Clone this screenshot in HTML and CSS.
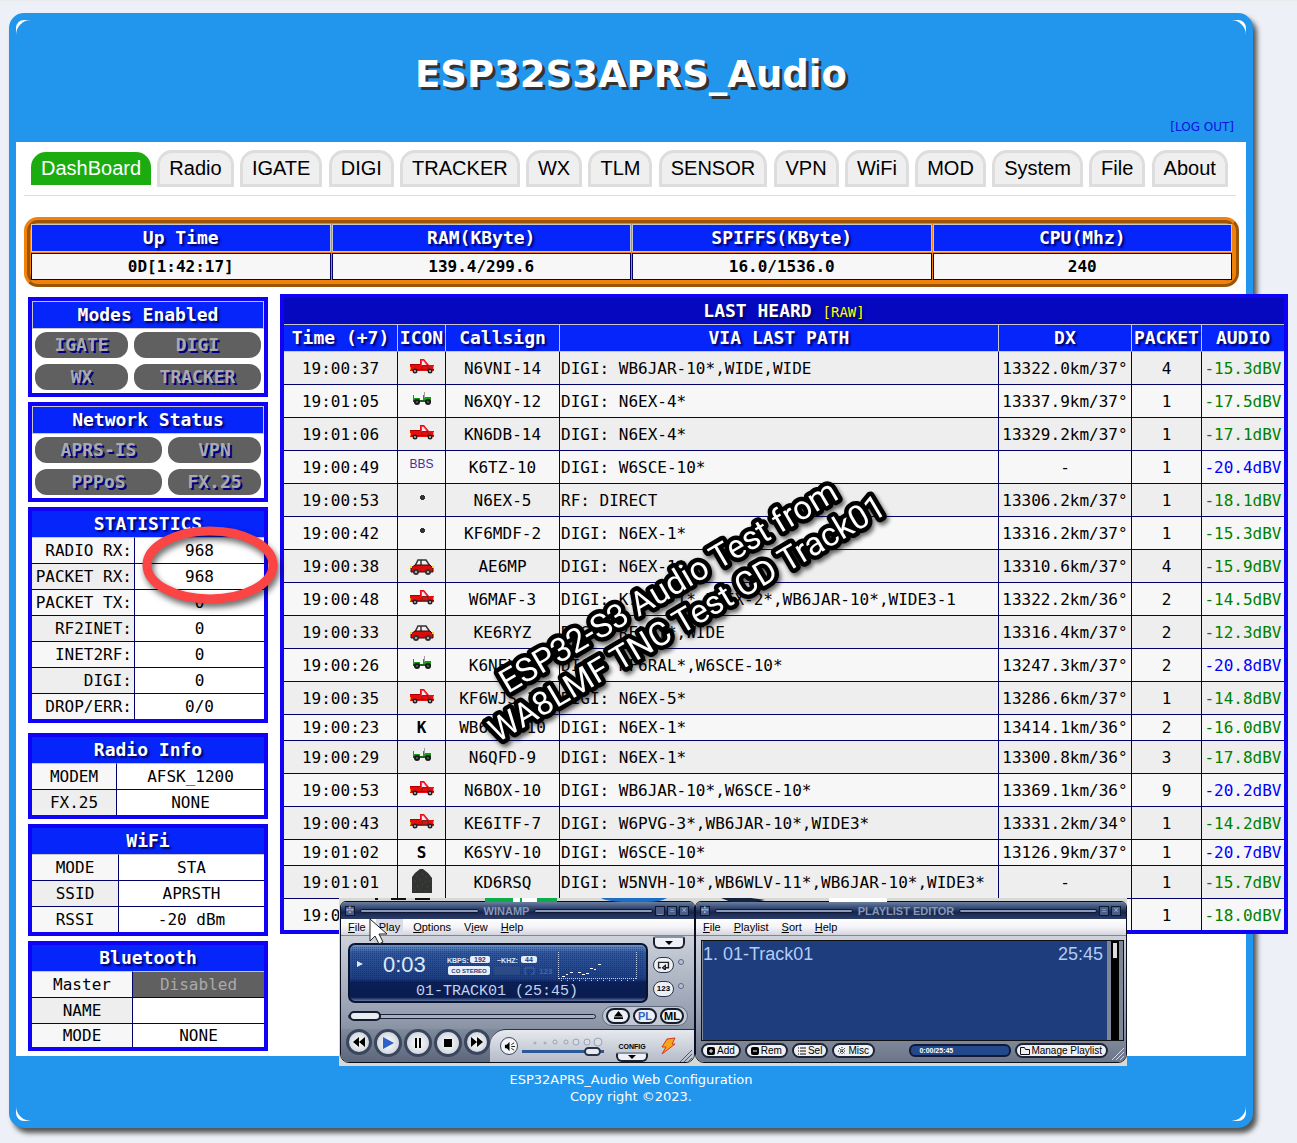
FILE: index.html
```html
<!DOCTYPE html>
<html lang="en">
<head>
<meta charset="utf-8">
<title>ESP32S3APRS_Audio</title>
<link rel="stylesheet" href="styles.css">
</head>
<body>
<svg class="sprites" aria-hidden="true">
  <symbol id="truck" viewBox="0 0 24 16">
    <path d="M0 6h10v-5h4l5 6h5v6H0z" fill="#e80c0c"/>
    <path d="M11.500 2.500h2l4 5h-6z" fill="#f7e9ee" stroke="#f0325f"/>
    <path d="M0 6h10v1H0zM0 11h24v1H0z" fill="#a00"/>
    <path d="M12 7.500h6v4h-6z" fill="none" stroke="#7c2020"/>
    <circle cx="5" cy="13" r="2.500" fill="#222"/><circle cx="5" cy="13" r="1" fill="#bbb"/>
    <circle cx="20" cy="13" r="2.500" fill="#222"/><circle cx="20" cy="13" r="1" fill="#bbb"/>
    <path d="M0 9h1v3H0zM23 8h1v3h-1z" fill="#f5a000"/>
  </symbol>
  <symbol id="jeep" viewBox="0 0 24 16">
    <path d="M3 4h1v3h6v2h3V4h1v2h7v5H3z" fill="#10a010"/>
    <path d="M3 9h18v2H3z" fill="#1c5e1c"/><path d="M14 1h1v6h-1z" fill="#a9a"/>
    <circle cx="7" cy="11" r="3" fill="#1a1a1a"/><circle cx="18" cy="11" r="3" fill="#1a1a1a"/>
    <circle cx="7" cy="11" r="1" fill="#666"/><circle cx="18" cy="11" r="1" fill="#666"/>
  </symbol>
  <symbol id="car" viewBox="0 0 24 18">
    <path d="M5 8l3-6h8l4 6z" fill="#eee" stroke="#333" stroke-width="1.500"/>
    <path d="M11 2v6" stroke="#333" stroke-width="1.500"/>
    <path d="M1 13v-3l4-3h15l3 3v4H1z" fill="#d80c0c" stroke="#400" stroke-width="1"/>
    <path d="M0 8h2v2H0zM22 8h2v2h-2z" fill="#f0e000"/>
    <circle cx="6" cy="14" r="3" fill="#333"/><circle cx="18" cy="14" r="3" fill="#333"/>
    <circle cx="6" cy="14" r="1" fill="#ccc"/><circle cx="18" cy="14" r="1" fill="#ccc"/>
  </symbol>
  <symbol id="dot" viewBox="0 0 24 16"><path d="M11 5h3v1h1v3h-1v1h-3V9h-1V6h1z" fill="#333"/></symbol>
  <symbol id="dome" viewBox="0 0 24 26">
    <path d="M2 25V9l3-4 5-4h3l5 4 4 5v15z" fill="#333"/>
    <path d="M7 8h1M12 6h1M16 9h1M5 13h1M10 12h1M15 14h1M19 13h1M7 18h1M12 17h1M17 19h1M5 22h1M10 22h1M15 23h1" stroke="#2c6b2c"/>
  </symbol>
</svg>

<div class="container">
  <header class="header">
    <h1>ESP32S3APRS_Audio</h1>
    <a class="logout" href="#logout">[LOG OUT]</a>
  </header>

  <main class="content">
    <nav class="tabs">
      <button class="tab active">DashBoard</button>
      <button class="tab">Radio</button>
      <button class="tab">IGATE</button>
      <button class="tab">DIGI</button>
      <button class="tab">TRACKER</button>
      <button class="tab">WX</button>
      <button class="tab">TLM</button>
      <button class="tab">SENSOR</button>
      <button class="tab">VPN</button>
      <button class="tab">WiFi</button>
      <button class="tab">MOD</button>
      <button class="tab">System</button>
      <button class="tab">File</button>
      <button class="tab">About</button>
    </nav>

    <table class="sysinfo">
      <tr><th>Up Time</th><th>RAM(KByte)</th><th>SPIFFS(KByte)</th><th>CPU(Mhz)</th></tr>
      <tr><td>0D[1:42:17]</td><td>139.4/299.6</td><td>16.0/1536.0</td><td>240</td></tr>
    </table>

    <div class="dashboard">
      <aside class="side">
        <section class="panel">
          <h2 class="framed">Modes Enabled</h2>
          <div class="pills modes"><span>IGATE</span><span>DIGI</span><span>WX</span><span>TRACKER</span></div>
        </section>
        <section class="panel">
          <h2 class="framed">Network Status</h2>
          <div class="pills network"><span>APRS-IS</span><span>VPN</span><span>PPPoS</span><span>FX.25</span></div>
        </section>
        <table class="panel stats">
          <tr><th colspan="2">STATISTICS</th></tr>
          <tr><td>RADIO RX:</td><td>968</td></tr>
          <tr><td>PACKET RX:</td><td>968</td></tr>
          <tr><td>PACKET TX:</td><td>0</td></tr>
          <tr><td>RF2INET:</td><td>0</td></tr>
          <tr><td>INET2RF:</td><td>0</td></tr>
          <tr><td>DIGI:</td><td>0</td></tr>
          <tr><td>DROP/ERR:</td><td>0/0</td></tr>
        </table>
        <table class="panel radio">
          <tr><th colspan="2">Radio Info</th></tr>
          <tr><td>MODEM</td><td>AFSK_1200</td></tr>
          <tr><td>FX.25</td><td>NONE</td></tr>
        </table>
        <table class="panel wifi">
          <tr><th colspan="2">WiFi</th></tr>
          <tr><td>MODE</td><td>STA</td></tr>
          <tr><td>SSID</td><td>APRSTH</td></tr>
          <tr><td>RSSI</td><td>-20 dBm</td></tr>
        </table>
        <table class="panel bluetooth">
          <tr><th colspan="2">Bluetooth</th></tr>
          <tr><td>Master</td><td class="disabled">Disabled</td></tr>
          <tr><td>NAME</td><td></td></tr>
          <tr><td>MODE</td><td>NONE</td></tr>
        </table>
      </aside>

      <div class="heard-wrap">
      <table class="heard">
        <colgroup><col class="c-time"><col class="c-icon"><col class="c-call"><col><col class="c-dx"><col class="c-packet"><col class="c-audio"></colgroup>
        <tr class="title"><th colspan="7">LAST HEARD <a href="#raw">[RAW]</a></th></tr>
        <tr><th>Time (+7)</th><th>ICON</th><th>Callsign</th><th>VIA LAST PATH</th><th>DX</th><th>PACKET</th><th>AUDIO</th></tr>
        <tr><td>19:00:37</td><td><svg class="ic"><use href="#truck"/></svg></td><td>N6VNI-14</td><td>DIGI: WB6JAR-10*,WIDE,WIDE</td><td>13322.0km/37°</td><td>4</td><td>-15.3dBV</td></tr>
        <tr><td>19:01:05</td><td><svg class="ic"><use href="#jeep"/></svg></td><td>N6XQY-12</td><td>DIGI: N6EX-4*</td><td>13337.9km/37°</td><td>1</td><td>-17.5dBV</td></tr>
        <tr><td>19:01:06</td><td><svg class="ic"><use href="#truck"/></svg></td><td>KN6DB-14</td><td>DIGI: N6EX-4*</td><td>13329.2km/37°</td><td>1</td><td>-17.1dBV</td></tr>
        <tr><td>19:00:49</td><td><span class="bbs">BBS</span></td><td>K6TZ-10</td><td>DIGI: W6SCE-10*</td><td>-</td><td>1</td><td class="low">-20.4dBV</td></tr>
        <tr><td>19:00:53</td><td><svg class="ic"><use href="#dot"/></svg></td><td>N6EX-5</td><td>RF: DIRECT</td><td>13306.2km/37°</td><td>1</td><td>-18.1dBV</td></tr>
        <tr><td>19:00:42</td><td><svg class="ic"><use href="#dot"/></svg></td><td>KF6MDF-2</td><td>DIGI: N6EX-1*</td><td>13316.2km/37°</td><td>1</td><td>-15.3dBV</td></tr>
        <tr><td>19:00:38</td><td><svg class="ic tall"><use href="#car"/></svg></td><td>AE6MP</td><td>DIGI: N6EX-1*</td><td>13310.6km/37°</td><td>4</td><td>-15.9dBV</td></tr>
        <tr><td>19:00:48</td><td><svg class="ic"><use href="#truck"/></svg></td><td>W6MAF-3</td><td>DIGI: K7GJE-1*,N6EX-2*,WB6JAR-10*,WIDE3-1</td><td>13322.2km/36°</td><td>2</td><td>-14.5dBV</td></tr>
        <tr><td>19:00:33</td><td><svg class="ic tall"><use href="#car"/></svg></td><td>KE6RYZ</td><td>DIGI: RELAY*,WIDE</td><td>13316.4km/37°</td><td>2</td><td>-12.3dBV</td></tr>
        <tr><td>19:00:26</td><td><svg class="ic"><use href="#jeep"/></svg></td><td>K6NEX-4</td><td>DIGI: KF6RAL*,W6SCE-10*</td><td>13247.3km/37°</td><td>2</td><td class="low">-20.8dBV</td></tr>
        <tr><td>19:00:35</td><td><svg class="ic"><use href="#truck"/></svg></td><td>KF6WJS-14</td><td>DIGI: N6EX-5*</td><td>13286.6km/37°</td><td>1</td><td>-14.8dBV</td></tr>
        <tr class="short"><td>19:00:23</td><td><b>K</b></td><td>WB6JAR-10</td><td>DIGI: N6EX-1*</td><td>13414.1km/36°</td><td>2</td><td>-16.0dBV</td></tr>
        <tr><td>19:00:29</td><td><svg class="ic"><use href="#jeep"/></svg></td><td>N6QFD-9</td><td>DIGI: N6EX-1*</td><td>13300.8km/36°</td><td>3</td><td>-17.8dBV</td></tr>
        <tr><td>19:00:53</td><td><svg class="ic"><use href="#truck"/></svg></td><td>N6BOX-10</td><td>DIGI: WB6JAR-10*,W6SCE-10*</td><td>13369.1km/36°</td><td>9</td><td class="low">-20.2dBV</td></tr>
        <tr><td>19:00:43</td><td><svg class="ic"><use href="#truck"/></svg></td><td>KE6ITF-7</td><td>DIGI: W6PVG-3*,WB6JAR-10*,WIDE3*</td><td>13331.2km/34°</td><td>1</td><td>-14.2dBV</td></tr>
        <tr class="short"><td>19:01:02</td><td><b>S</b></td><td>K6SYV-10</td><td>DIGI: W6SCE-10*</td><td>13126.9km/37°</td><td>1</td><td class="low">-20.7dBV</td></tr>
        <tr><td>19:01:01</td><td><svg class="ic dome"><use href="#dome"/></svg></td><td>KD6RSQ</td><td>DIGI: W5NVH-10*,WB6WLV-11*,WB6JAR-10*,WIDE3*</td><td>-</td><td>1</td><td>-15.7dBV</td></tr>
        <tr><td>19:00:31</td><td></td><td></td><td></td><td></td><td>1</td><td>-18.0dBV</td></tr>
      </table>
      </div>
    </div>
  </main>

  <footer class="footer">ESP32APRS_Audio Web Configuration<br>Copy right ©2023.</footer>
</div>

<svg class="ring" viewBox="0 0 150 96" aria-hidden="true"><ellipse cx="72" cy="43" rx="63" ry="34" fill="none" stroke="#fb4444" stroke-width="9"/></svg>

<svg class="note" viewBox="0 0 460 320">
  <g transform="rotate(-30.500 230 160)" text-anchor="middle">
    <text x="230" y="152">ESP32-S3 Audio Test from</text>
    <text x="230" y="189">WA8LMF TNC Test CD Track01</text>
  </g>
</svg>

<div class="winamp">
  <svg class="scraps" viewBox="0 0 788 4" aria-hidden="true">
    <path d="M36 0h3v2h-3zM52 0h15v2H52zM76 0h15v2H76z" fill="#111"/>
    <path d="M146 0h72v4h-72z" fill="#0aad4a"/><path d="M174 0h7v4h-7zM183 0h15v4h-15z" fill="#fff"/>
    <path d="M262 0h66q-6 4-20 4h-24q-18-1-22-4z" fill="#1c6fc4"/>
    <path d="M382 0h30l14 2-10 2h-24z" fill="#16233f"/><path d="M490 0h58v4h-58z" fill="#fff"/>
  </svg>
  <section class="win player">
    <div class="bar"><i class="sys">✣</i><i class="grip"></i><b>WINAMP</b><i class="grip"></i>
      <button aria-label="Minimise">_</button><button aria-label="Shade">=</button><button aria-label="Close">×</button></div>
    <div class="menu"><button><u>F</u>ile</button><button class="hot">Play</button><button><u>O</u>ptions</button><button>V<u>i</u>ew</button><button><u>H</u>elp</button></div>
    <div class="deck">
      <div class="top">
        <svg class="display" viewBox="0 0 300 60">
          <defs>
            <linearGradient id="lcd" x2="0" y2="1"><stop stop-color="#6f9ad0"/><stop offset=".15" stop-color="#31569a"/><stop offset=".6" stop-color="#1d3d80"/><stop offset=".66" stop-color="#0b1f55"/><stop offset=".92" stop-color="#0a1c50"/><stop offset="1" stop-color="#7b93c0"/></linearGradient>
            <pattern id="mesh" width="2" height="2" patternUnits="userSpaceOnUse"><path d="M0 0h1v1H0z" fill="#0a1f58" opacity=".45"/></pattern>
          </defs>
          <rect x="1" y="1" width="298" height="58" rx="6" fill="url(#lcd)" stroke="#0a1430" stroke-width="2"/>
          <rect x="4" y="4" width="292" height="36" fill="url(#mesh)"/>
          <path d="M9 18l6 3-6 3z" fill="#dfe9fa"/>
          <text x="35" y="29" class="lcd-time">0:03</text>
          <text x="99" y="20" class="lcd-tiny">KBPS:</text>
          <rect x="122" y="13" width="20" height="7" rx="2" fill="#e8effc"/><text x="126" y="19" class="lcd-tiny dark">192</text>
          <text x="149" y="20" class="lcd-tiny">~KHZ:</text>
          <rect x="173" y="13" width="16" height="7" rx="2" fill="#e8effc"/><text x="177" y="19" class="lcd-tiny dark">44</text>
          <rect x="100" y="23" width="42" height="9" rx="2" fill="#e8effc"/><text x="121" y="30" text-anchor="middle" class="lcd-stereo">CO STEREO</text>
          <rect x="146" y="23" width="26" height="9" rx="2" fill="#2c4a86"/>
          <path d="M179 31h-2v-6h9v6h-3" fill="none" stroke="#4466a0"/><text x="191" y="31" class="lcd-dim">123</text>
          <g stroke="#c3d3ef" fill="none"><path d="M210.500 9v28M288.500 9v28" stroke-dasharray="1 1"/><path d="M211 35.500h78" stroke-dasharray="1 1"/><path d="M213 37.500h75" stroke-dasharray="1 5"/></g>
          <path d="M214 33h3v1h-3zM218 31h2v1h-2zM222 29h3v1h-3zM230 29h3v1h-3zM234 31h3v1h-3zM238 30h3v1h-3zM242 25h3v1h-3zM246 26h2v1h-2zM250 21h3v1h-3z" fill="#fff"/>
          <text x="149" y="52" text-anchor="middle" class="lcd-track">01-TRACK01 (25:45)</text>
        </svg>
        <div class="toggles">
          <button class="drop" aria-label="Options menu"><svg viewBox="0 0 8 4"><path d="M0 0h8L4 4z"/></svg></button>
          <span><button class="oval" aria-label="Repeat"><svg viewBox="0 0 14 10"><path d="M4 7.500H1.500v-6h11v6H9M9 5v5L6 7.500z" fill="none" stroke="#222" stroke-width="1.500"/></svg></button><i class="led"></i></span>
          <span><button class="oval" aria-label="Shuffle">123</button><i class="led"></i></span>
        </div>
      </div>
      <div class="seek">
        <input type="range" class="pos" min="0" max="100" value="0" aria-label="Position">
        <div class="chips"><button aria-label="Eject"><svg viewBox="0 0 10 10"><path d="M5 0l5 6H0zM0 7h10v2H0z"/></svg></button><button class="on">PL</button><button>ML</button></div>
      </div>
      <div class="transport">
        <div class="keys">
          <button class="sm" aria-label="Previous"><svg viewBox="0 0 12 12"><path d="M6 1v10L0 6zM12 1v10L6 6z"/></svg></button>
          <button aria-label="Play"><svg viewBox="0 0 12 12"><path d="M1 0l11 6-11 6z" fill="#2e62c8"/></svg></button>
          <button aria-label="Pause"><svg viewBox="0 0 12 12"><path d="M3 1h2v10H3zM7 1h2v10H7z"/></svg></button>
          <button aria-label="Stop"><svg viewBox="0 0 12 12"><path d="M2 2h8v8H2z"/></svg></button>
          <button class="sm" aria-label="Next"><svg viewBox="0 0 12 12"><path d="M0 1l6 5-6 5zM6 1l6 5-6 5z"/></svg></button>
        </div>
        <div class="volume">
          <button class="spk" aria-label="Mute"><svg viewBox="0 0 12 12"><path d="M1 4h2l3-3v10L3 8H1z"/><path d="M8 4l3-2M8 6h4M8 8l3 2" stroke="#111"/></svg></button>
          <div class="level">
            <svg viewBox="0 0 82 10" aria-hidden="true"><g fill="#d9dde5" stroke="#9aa3b3"><circle cx="13" cy="6" r="1"/><circle cx="23" cy="6" r="1"/><circle cx="33" cy="5" r="2"/><circle cx="44" cy="5" r="2"/><circle cx="54" cy="5" r="3"/><circle cx="65" cy="5" r="3"/><circle cx="76" cy="5" r="4"/></g></svg>
            <input type="range" class="vol" min="0" max="100" value="95" aria-label="Volume">
          </div>
          <div class="config">CONFIG<button class="drop" aria-label="Config"><svg viewBox="0 0 8 4"><path d="M0 0h8L4 4z"/></svg></button></div>
          <svg class="bolt" viewBox="0 0 16 18"><path d="M7 2l8-1-3 6h3L2 17l4-7H2z" fill="#f9a51c" stroke="#d2381a"/></svg>
          <svg class="resize" viewBox="0 0 12 12"><path d="M0 12L12 0M4 12l8-8M8 12l4-4" stroke="#4d586c"/></svg>
        </div>
      </div>
    </div>
  </section>

  <section class="win playlist">
    <div class="bar"><i class="sys">✣</i><i class="grip"></i><b>PLAYLIST EDITOR</b><i class="grip"></i>
      <button aria-label="Shade">=</button><button aria-label="Close">×</button></div>
    <div class="menu"><button><u>F</u>ile</button><button><u>P</u>laylist</button><button><u>S</u>ort</button><button><u>H</u>elp</button></div>
    <div class="deck">
      <div class="list"><div class="track"><span>1. 01-Track01</span><span>25:45</span></div><i class="scroll"></i></div>
      <div class="tools">
        <button><svg viewBox="0 0 10 8"><rect x="1" width="8" height="8" rx="2"/><path d="M3 4h4M5 2v4" stroke="#fff"/></svg>Add</button>
        <button><svg viewBox="0 0 10 8"><rect x="1" width="8" height="8" rx="2"/><path d="M3 4h4" stroke="#fff"/></svg>Rem</button>
        <button><svg viewBox="0 0 10 8"><path d="M1 1h1M3 1h6M1 4h1M3 4h6M1 7h1M3 7h6" stroke="#111"/></svg>Sel</button>
        <button><svg viewBox="0 0 10 8"><path d="M5 0v8M1 4h8M2 1l6 6M8 1L2 7" stroke="#111" stroke-dasharray="1 1"/></svg>Misc</button>
        <span class="clock">0:00/25:45</span>
        <button><svg viewBox="0 0 10 8"><path d="M.500 7.500v-7h4l1 2h4v5z" fill="none" stroke="#111"/></svg>Manage Playlist</button>
        <svg class="resize" viewBox="0 0 12 12"><path d="M0 12L12 0M4 12l8-8M8 12l4-4" stroke="#d5dbe6"/></svg>
      </div>
    </div>
  </section>
</div>
<svg class="cursor" viewBox="0 0 20 28" aria-hidden="true"><path d="M1 1v22l5-5 4 8 4-2-4-8h8z" fill="#fff" stroke="#222"/></svg>
</body>
</html>
```

FILE: styles.css
```css
* { box-sizing: border-box; }
body {
  margin: 0;
  padding: 12px 44px 15px 9px;
  border-top: 1px solid #e8eaec;
  position: relative;
  background: #edf0f6;
  font-family: "DejaVu Sans Mono", monospace;
  font-size: 16px;
  line-height: 20px;
  color: #000;
}
button { font: inherit; color: inherit; margin: 0; padding: 0; border: 0; background: none; }
.sprites { position: absolute; width: 0; height: 0; }

.container {
  border: 7px solid #2196ec;
  border-radius: 15px;
  background: #fff;
  box-shadow: 4px 5px 5px #555;
}
.header {
  height: 122px;
  padding: 31px 12px 5px;
  border-radius: 15px 15px 0 0;
  background: #2196ec;
  display: flex;
  flex-direction: column;
  justify-content: space-between;
  font-family: "DejaVu Sans", sans-serif;
}
h1 {
  margin: 0;
  text-align: center;
  font: bold 37px/48px "DejaVu Sans", sans-serif;
  color: #fff;
  text-shadow: 3px 3px 0 #333;
}
.logout { align-self: flex-end; font-size: 12px; line-height: 20px; color: #0a12e0; text-decoration: none; }

.tabs {
  margin: 0 10px 21px 8px;
  padding: 8px 8px 8px 7px;
  border-bottom: 1px solid #ddd;
  display: flex;
  align-items: center;
  justify-content: space-between;
}
.tab {
  height: 37px;
  padding: 0 9px;
  border: 3px solid #ddd;
  border-radius: 15px 15px 0 0;
  background: #efefef;
  font: 20px/23px "Liberation Sans", sans-serif;
  white-space: nowrap;
}
.tab.active { height: 33px; padding: 0 10px; border: 0; background: #1bad0f; color: #fff; }

.sysinfo {
  width: calc(100% - 15px);
  margin: 0 7px 0 8px;
  border: 6px ridge #f0810a;
  border-radius: 14px;
  border-spacing: 1px;
  background: #f0810a;
  table-layout: fixed;
  text-align: center;
}
.sysinfo th { height: 28px; padding: 0; border: 1px solid #c8c8c8; background: #0525fa; color: #fff; font-size: 18px; text-shadow: 2px 2px 2px #000060; }
.sysinfo td { height: 27px; padding: 0; border: 1px solid #006; background: #f7f7f7; font-weight: bold; }

.dashboard { display: flex; align-items: flex-start; gap: 12px; padding: 7px 0 5px 12px; }
.side { width: 240px; padding-top: 3px; flex: none; display: flex; flex-direction: column; gap: 5px; }
.panel { width: 100%; border: 4px solid #1002f5; border-spacing: 0; background: #fff; }
.panel h2, .panel th, .heard th {
  margin: 0;
  padding: 0;
  height: 26px;
  background: #0525fa;
  color: #fff;
  font-size: 18px;
  line-height: 20px;
  font-weight: bold;
  text-align: center;
  text-shadow: 2px 2px 2px #000060;
}
.panel h2.framed { height: 28px; line-height: 26px; border: 1px solid #c8c8c8; }
.pills { display: grid; gap: 6px; padding: 3px; text-align: center; }
.modes { grid-template-columns: 93px 1fr; }
.network { grid-template-columns: 1fr 93px; }
.pills span { height: 26px; border-radius: 12px; background: #606060; color: #aaa; font-weight: bold; font-size: 18px; line-height: 26px; text-shadow: 2px 2px 0 #000080; }
.panel td { height: 26px; padding: 0 2px; border-top: 1px solid #006; text-align: center; }
.panel td + td { border-left: 1px solid #006; }
.panel tr:nth-child(2) td { border-top-color: #c8c8c8; }
.panel td:first-child { background: #f7f7f7; }
.panel tr:nth-child(odd) td:first-child { background: #eee; }
.stats td:first-child { width: 102px; text-align: right; }
.radio { margin-top: 5px; }
.radio td:first-child { width: 84px; }
.wifi td:first-child { width: 86px; }
.bluetooth td:first-child { width: 100px; }
.bluetooth tr:last-child td { height: 24px; }
.panel td.disabled { background: #606060; color: #aaa; }

.heard-wrap { flex: 1; min-width: 0; margin-right: -42px; }
.heard { width: 100%; border: 4px solid #1002f5; border-spacing: 0; table-layout: fixed; white-space: nowrap; }
.c-time { width: 113px; }
.c-icon { width: 48px; }
.c-call { width: 114px; }
.c-dx { width: 133px; }
.c-packet { width: 70px; }
.c-audio { width: 83px; }
.heard th { height: 27px; border-top: 1px solid #c8c8c8; }
.heard .title th { height: 26px; background: #0608c0; border: 0; }
.heard .title a { font-size: 14px; font-weight: normal; color: #ff0; text-decoration: none; }
.heard th + th { border-left: 1px solid #c8c8c8; }
.heard td { height: 33px; padding: 2px 0 0; border-top: 1px solid #006; text-align: center; background: #f7f7f7; }
.heard tr:nth-child(odd) td { background: #eee; }
.heard tr:nth-child(3) td { border-top-color: #c8c8c8; }
.heard tr.short td { height: 26px; padding-top: 0; }
.heard tr:last-child td { height: 32px; }
.heard td + td { border-left: 1px solid #006; }
.heard td:nth-child(4) { text-align: left; padding-left: 1px; }
.heard td:last-child { color: #008000; }
.heard td.low { color: #00f; }
.ic { display: block; width: 24px; height: 16px; margin: 0 auto 6px; }
.ic.tall { height: 18px; margin-bottom: 0; }
.ic.dome { height: 26px; margin-bottom: 4px; }
.bbs { display: block; margin-bottom: 8px; font: 12px/16px "Liberation Sans Narrow", "Liberation Sans", sans-serif; color: #4a2ca8; }

.footer { height: 65px; padding-top: 15px; border-radius: 0 0 15px 15px; background: #2196ec; color: #fff; text-align: center; font: 13px/17px "DejaVu Sans", sans-serif; }

/* Annotations */
.ring { position: absolute; left: 138px; top: 521px; width: 150px; height: 96px; filter: drop-shadow(2px 4px 3px rgba(0,0,0,.6)); }
.note { position: absolute; left: 448px; top: 442px; width: 460px; height: 320px; overflow: visible; filter: drop-shadow(2px 3px 2px rgba(0,0,0,.6)); }
.note text { font: 33px Roboto, sans-serif; fill: #fff; stroke: #000; stroke-width: 9px; stroke-linejoin: round; paint-order: stroke; }

/* Winamp */
.winamp {
  position: absolute;
  left: 339px;
  top: 897px;
  width: 788px;
  height: 168px;
  padding: 3px 0 3px 1px;
  display: flex;
  background: #d8d8d4;
  font-family: "Liberation Sans", sans-serif;
  font-size: 12px;
  line-height: 14px;
}
.scraps { position: absolute; left: 0; top: 0; width: 788px; height: 4px; }
.win { display: flex; flex-direction: column; border: 1px solid #0a0f20; border-radius: 6px 6px 9px 9px; overflow: hidden; }
.player { width: 355px; }
.playlist { flex: 1; }
.bar { height: 17px; flex: none; padding: 0 5px 0 4px; display: flex; align-items: center; gap: 5px; background: linear-gradient(#6a7f9f, #3c507a 30%, #16254f 60%, #2c3e68); color: #8797b5; }
.bar b { font-size: 11px; line-height: 12px; }
.bar button, .sys { width: 10px; height: 10px; border: 1px solid #0d1733; background: #4b5f86; font-size: 9px; line-height: 7px; font-style: normal; text-align: center; color: #a6b4cc; margin-left: -3px; }
.sys { margin: 0; }
.grip { flex: 1; height: 4px; border: 1px solid #0d1733; border-radius: 2px; background: #8b9ab8; }
.menu { height: 17px; flex: none; padding-left: 4px; display: flex; background: linear-gradient(#fff, #f4f4f8 50%, #d4d4de); border-bottom: 1px solid #7d8798; color: #000; }
.menu button { font-size: 11px; margin-right: 7px; padding: 0 3px; }
.menu .hot { background: #dcdce6; }
.deck { flex: 1; background: linear-gradient(#cdd2db, #98a1b2 60%, #6c7688); display: flex; flex-direction: column; }
.top { display: flex; height: 67px; padding-left: 7px; gap: 5px; }
.display { width: 300px; height: 60px; margin-top: 7px; flex: none; }
.lcd-time { font: 22px "Liberation Sans", sans-serif; fill: #dfe9fa; }
.lcd-tiny { font: bold 7px "Liberation Sans", sans-serif; fill: #dfe9fa; }
.lcd-tiny.dark { fill: #1d3d80; }
.lcd-stereo { font: bold 6px "Liberation Sans", sans-serif; fill: #1d3d80; }
.lcd-dim { font: bold 8px "Liberation Sans", sans-serif; fill: #4466a0; }
.lcd-track { font: 15px "Liberation Mono", monospace; fill: #c3d3ef; }
.toggles { display: flex; flex-direction: column; gap: 8px; }
.toggles span { display: flex; gap: 4px; }
.drop { width: 32px; height: 13px; border: 2px solid #1a2233; border-top-color: #8a93a5; border-radius: 3px 3px 6px 6px; background: #eef0f5; display: flex; align-items: center; justify-content: center; }
.drop svg { width: 8px; height: 4px; }
.oval { width: 21px; height: 16px; border: 1px solid #28334a; border-radius: 8px; background: #eceff4; font-size: 8px; line-height: 12px; font-weight: bold; display: flex; align-items: center; justify-content: center; }
.oval svg { width: 13px; height: 9px; }
.led { width: 6px; height: 6px; margin-top: 2px; border: 1px solid #5a6780; border-radius: 50%; background: #b4c2da; }
.seek { height: 26px; padding: 3px 6px 3px 7px; display: flex; align-items: center; justify-content: space-between; }
input[type=range] { appearance: none; margin: 0; background: none; }
.pos { width: 248px; height: 10px; }
.pos::-webkit-slider-runnable-track { height: 5px; border: 1px solid #1a2233; border-radius: 3px; background: #a7b0c0; }
.pos::-webkit-slider-thumb { appearance: none; width: 32px; height: 10px; margin-top: -4px; border: 2px solid #141c2e; border-radius: 5px; background: #e8ebf0; }
.chips { display: flex; gap: 3px; padding: 1px 3px; border: 1px solid #5f6a7e; border-radius: 11px; background: #c3c9d4; }
.chips button { width: 24px; height: 16px; border: 2px solid #141c2e; border-radius: 8px; background: #eceff4; font-size: 11px; font-weight: bold; line-height: 11px; }
.chips svg { width: 9px; height: 9px; vertical-align: top; }
.chips .on { color: #2e62c8; }
.transport { flex: 1; display: flex; padding-left: 5px; background: linear-gradient(#7e899c, #5c677c); }
.keys { display: flex; align-items: flex-start; gap: 2px; width: 149px; }
.keys button { width: 28px; height: 28px; border: 3px solid #3a465c; border-radius: 50%; background: radial-gradient(#fff, #c0c7d3); display: flex; align-items: center; justify-content: center; }
.keys .sm { width: 26px; height: 26px; }
.keys svg { width: 12px; height: 12px; flex: none; }
.volume { flex: 1; display: flex; align-items: center; gap: 4px; padding: 0 2px 0 10px; border-top: 1px solid #2a3448; border-radius: 16px 0 0 0; background: linear-gradient(#e6e9ee, #b4bbc8); }
.spk { width: 18px; height: 18px; border: 1px solid #3a465c; border-radius: 50%; background: #f2f4f8; }
.spk svg { width: 11px; height: 11px; display: block; margin: auto; }
.level { display: flex; flex-direction: column; width: 82px; }
.level svg { width: 82px; height: 10px; }
.vol { width: 82px; height: 9px; }
.vol::-webkit-slider-runnable-track { height: 3px; background: #2c5898; }
.vol::-webkit-slider-thumb { appearance: none; width: 17px; height: 9px; margin-top: -3px; border: 2px solid #28334a; border-radius: 5px; background: #e8ebf0; }
.config { display: flex; flex-direction: column; align-items: center; align-self: flex-end; margin-left: 8px; font-size: 7px; line-height: 10px; font-weight: bold; }
.config .drop { height: 10px; }
.bolt { width: 16px; height: 18px; margin-left: 8px; }
.resize { width: 12px; height: 12px; flex: none; align-self: flex-end; }

.playlist .deck { padding: 4px 2px 2px 5px; }
.list { height: 101px; display: flex; gap: 4px; border: 1px solid #111; padding: 0 4px 0 1px; background: #7f8796; }
.track { flex: 1; height: 99px; padding: 2px 4px 0 0; display: flex; justify-content: space-between; background: #1d3d7c; color: #b4ccf6; font-size: 18px; line-height: 22px; }
.scroll { width: 8px; border: solid #000; border-width: 2px 2px 0; background: linear-gradient(#ddd 15px, #000 15px); }
.tools { flex: 1; display: flex; align-items: center; gap: 4px; }
.tools button { height: 15px; padding: 0 4px 0 3px; border: 2px solid #1c2436; border-radius: 8px; background: #eef0f4; display: flex; align-items: center; gap: 1px; font-size: 10px; line-height: 11px; white-space: nowrap; }
.tools button svg { width: 10px; height: 8px; flex: none; }
.clock { width: 102px; height: 13px; margin-left: auto; padding-left: 8px; border: 2px solid #101a38; border-radius: 6px; background: #24488c; color: #fff; font-size: 7px; line-height: 9px; font-weight: bold; }
.cursor { position: absolute; left: 369px; top: 917px; width: 20px; height: 28px; }
```
